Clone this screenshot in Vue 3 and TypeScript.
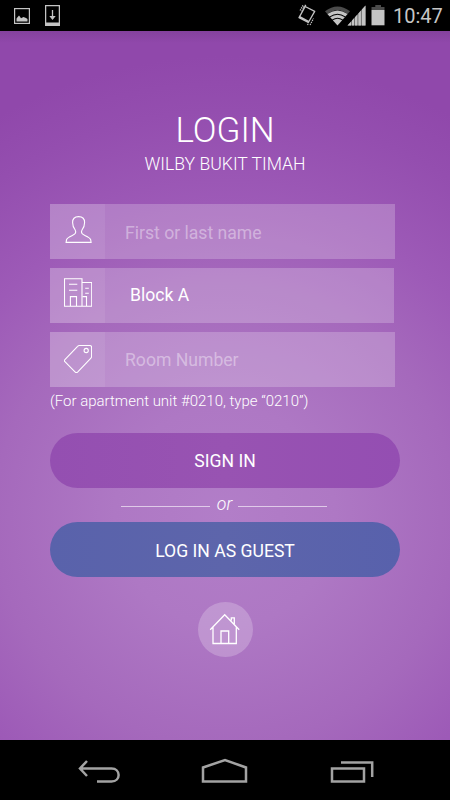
<script setup lang="ts">
import { ref } from 'vue'

const name = ref<string>('')
const block = ref<string>('Block A')
const room = ref<string>('')
</script>

<template>
  <div class="screen">
    <header class="status">
      <div class="status-left">
        <svg class="pic" width="16" height="16" viewBox="0 0 16 16">
          <rect x="0.6" y="0.6" width="14.8" height="14.8" fill="none" stroke="#c4c4c4" stroke-width="1.2" />
          <path d="M2.5 13.5V10.5L3.5 9.3L5 7.5L6 8.7L7 10.2L9.5 9L12 10L13.5 11V13.5Z" fill="#c4c4c4" />
        </svg>
        <svg width="15" height="22" viewBox="0 0 15 22">
          <path d="M0.6 0.6H14.4V20.4H0.6Z" fill="none" stroke="#c4c4c4" stroke-width="1.3" />
          <rect x="0" y="17.5" width="15" height="3.5" fill="#c4c4c4" />
          <path d="M7.5 5V12" stroke="#c4c4c4" stroke-width="1.3" />
          <path d="M4.3 11H10.7L7.5 15Z" fill="#c4c4c4" />
        </svg>
      </div>
      <div class="status-right">
        <svg width="18" height="22" viewBox="0 0 18 22">
          <path d="M7.2 2.5L16.7 7.4L10.3 18.5L1 13.6Z" fill="none" stroke="#c4c4c4" stroke-width="1.3" stroke-linejoin="round" />
          <path d="M1 13.6L10.3 18.5L11.2 17L2 12Z" fill="#c4c4c4" />
          <path d="M2 6.5L5 1M3.7 7.5L7 1M12 21L15.5 14.5M9.5 21L10.5 19M5.2 3.5L8 1" stroke="#c4c4c4" stroke-width="1.1" stroke-dasharray="1.5 0.8" fill="none" />
        </svg>
        <svg class="signals" width="41" height="22" viewBox="0 0 41 22">
          <path d="M0 7.2Q12.5 -2.2 25 7.2L22.6 10.1Q12.5 2.2 2.4 10.1Z" fill="#4b4b4b" />
          <path d="M2.4 10.1Q12.5 2.8 22.6 10.1L20.4 12.6Q12.5 6.8 4.6 12.6Z" fill="#c4c4c4" />
          <path d="M5.2 13.3Q12.5 8.2 19.8 13.3L17.8 15.6Q12.5 12 7.2 15.6Z" fill="#c4c4c4" />
          <path d="M7.8 16.2Q12.5 13.2 17.2 16.2L12.5 21.5Z" fill="#c4c4c4" />
          <path d="M22.5 21.5L40.5 1.5V21.5Z" fill="#707070" />
          <path d="M22.5 21.5L26 17.8V21.5ZM27 16.5L29 14.3V21.5H27ZM30 13.2L32.4 10.6V21.5H30ZM33.4 9.5L35.9 6.6V21.5H33.4ZM36.9 5.4L40.5 1.5V21.5H36.9Z" fill="#c4c4c4" />
        </svg>
        <svg class="battery" width="14" height="21" viewBox="0 0 14 21">
          <path d="M4.3 0H10V2H13.5V5H0.5V2H4.3Z" fill="#4b4b4b" />
          <rect x="0.5" y="5" width="13" height="15.3" fill="#c4c4c4" />
        </svg>
        <time class="clock">10:47</time>
      </div>
    </header>

    <main class="content">
      <h1>LOGIN</h1>
      <h2>WILBY BUKIT TIMAH</h2>

      <form class="form" @submit.prevent>
        <label class="field">
          <span class="icon">
            <svg width="28" height="30" viewBox="-0.6 -0.6 28 30">
              <path d="M14 1C9.9 1 7.8 3.4 8 7C8 10.2 8.9 12.4 10.6 14.4C11.2 15.4 11.2 16.9 10.6 18C9.4 20.1 3.2 20.4 1.9 24.2L1.5 26.8H26.5L26.1 24.2C24.8 20.4 18.6 20.1 17.4 18C16.8 16.9 16.8 15.4 17.4 14.4C19.1 12.4 20 10.2 20 7C20.2 3.4 18.1 1 14 1Z" />
            </svg>
          </span>
          <input v-model="name" type="text" placeholder="First or last name" />
        </label>
        <label class="field block">
          <span class="icon">
            <svg width="28" height="30" viewBox="0 0 28 30">
              <path d="M0.5 0.7H18V28.3H0.5ZM18 4.5H27.7V28.3H18" />
              <path d="M5 6.3H13.3M5 12.3H13.3M21.2 10.2H24.8M21.2 15.2H24.8M6.4 28V18.6H12.5V28M18.5 18.6H22.5V28" />
            </svg>
          </span>
          <input v-model="block" type="text" />
        </label>
        <label class="field room">
          <span class="icon">
            <svg width="28" height="30" viewBox="0 -0.5 28 30">
              <path d="M15.4 1H25.7Q27.6 1 27.6 2.9V11.9Q27.6 13 26.7 13.8L13.8 27.3Q12.4 28.7 11 27.3L0.9 17.2Q-0.1 16.2 0.9 15.2L13.6 1.8Q14.3 1 15.4 1Z" />
              <circle cx="22.2" cy="6" r="2.1" />
            </svg>
          </span>
          <input v-model="room" type="text" placeholder="Room Number" />
        </label>
        <p class="hint">(For apartment unit #0210, type “0210”)</p>
        <button class="btn signin" type="submit">SIGN IN</button>
        <div class="divider"><i class="line"></i><em>or</em><i class="line"></i></div>
        <button class="btn guest" type="button">LOG IN AS GUEST</button>
      </form>

      <button class="home" type="button" aria-label="Home">
        <svg width="32" height="32" viewBox="0 0 32 32">
          <path d="M1.2 16.8L15.7 1.7L30.2 16.8M4 14V30.5H27.3V14M12 30V18H19.7V30M22.3 7.5V4.8H25.3V11" />
        </svg>
      </button>
    </main>

    <nav class="navbar">
      <svg width="42" height="24" viewBox="0 0 42 24">
        <path d="M9 1L2 8.5L9 16M2 8.5H33.5C43 8.5 43 21.5 33.5 21.5H19" />
      </svg>
      <svg width="48" height="26" viewBox="0 0 48 26">
        <path d="M2 9.5L24 2L45 9.5V23.5H2Z" />
      </svg>
      <svg width="44" height="24" viewBox="0 0 44 24">
        <path d="M2 8.5H34V21.5H2ZM11 2.5H42.2V17" />
      </svg>
    </nav>
  </div>
</template>

<style>
body {
  margin: 0;
}
</style>

<style scoped>
.screen {
  width: 450px;
  height: 800px;
  display: flex;
  flex-direction: column;
  overflow: hidden;
  font-family: Roboto, "Noto Sans", sans-serif;
  color: #fff;
  background: #000;
}
svg {
  display: block;
  flex: none;
}
.status {
  height: 31px;
  flex: none;
  display: flex;
  justify-content: space-between;
  padding: 0 7px 0 14px;
}
.status-left {
  display: flex;
  gap: 15px;
  padding-top: 5px;
}
.pic {
  margin-top: 3px;
}
.status-right {
  display: flex;
  padding-top: 4px;
}
.signals {
  margin-left: 9px;
}
.battery {
  margin: 1px 8px 0 5px;
}
.clock {
  margin-top: -4px;
  width: 50px;
  font-size: 20px;
  line-height: 33px;
  color: #c6c6c6;
  white-space: nowrap;
}
.content {
  height: 709px;
  flex: none;
  box-sizing: border-box;
  padding: 78px 50px 0;
  display: flex;
  flex-direction: column;
  align-items: center;
  background:
    linear-gradient(rgba(70, 30, 90, 0.16), rgba(70, 30, 90, 0) 12px),
    radial-gradient(circle 460px at 50% 485px, #b27ec8 0%, #ae78c4 24%, #a569bc 50%, #9d5ab7 68%, #944eaf 88%, #9048ab 100%);
}
h1,
h2 {
  margin: 0;
  font-weight: 300;
  white-space: nowrap;
}
h1 {
  font-size: 35px;
  line-height: 43px;
}
h2 {
  font-size: 17.6px;
  line-height: 24px;
}
.form {
  width: 350px;
  margin-top: 28px;
  display: flex;
  flex-direction: column;
}
.field {
  width: 345px;
  height: 55px;
  margin-bottom: 9px;
  display: flex;
  background: rgba(255, 255, 255, 0.22);
}
.icon {
  width: 55px;
  display: flex;
  align-items: flex-start;
  justify-content: center;
  box-sizing: border-box;
  padding: 11px 0 0 1px;
  background: rgba(255, 255, 255, 0.07);
}
.icon path,
.icon circle,
.home path {
  fill: none;
  stroke: #fff;
  stroke-width: 1.1;
}
.field input {
  flex: 1;
  min-width: 0;
  border: 0;
  outline: 0;
  padding: 3px 0 0 20px;
  background: none;
  font-family: inherit;
  font-size: 17.6px;
  color: #fff;
}
.field input::placeholder {
  color: rgba(255, 255, 255, 0.4);
  opacity: 1;
}
.block {
  width: 344px;
}
.block .icon {
  padding-top: 10px;
}
.field.block input {
  padding: 0 0 1px 25px;
}
.room .icon {
  padding-top: 12px;
}
.field.room input {
  padding: 1px 0 0 20px;
}
.hint {
  margin: -6px 0 21px;
  font-size: 15px;
  font-weight: 300;
  line-height: 22px;
  white-space: nowrap;
}
.btn {
  width: 350px;
  height: 55px;
  border: 0;
  border-radius: 28px;
  padding: 0;
  font-family: inherit;
  font-size: 17.6px;
  color: #fff;
}
.signin {
  background: linear-gradient(90deg, #944fb1, #9853b2 50%, #944eb2);
}
.guest {
  padding-top: 2px;
  background: linear-gradient(90deg, #5962ab, #5d65ab 50%, #5861ac);
}
.divider {
  height: 34px;
  display: flex;
  justify-content: center;
  padding-right: 2px;
}
.line {
  width: 89px;
  height: 1px;
  margin-top: 18px;
  background: rgba(255, 255, 255, 0.6);
}
.divider em {
  width: 28px;
  padding-left: 1px;
  box-sizing: border-box;
  text-align: center;
  font-size: 17.6px;
  font-weight: 300;
  line-height: 33px;
}
.home {
  width: 55px;
  height: 55px;
  margin-top: 25px;
  padding: 0 0 2px;
  border: 0;
  border-radius: 50%;
  display: flex;
  align-items: center;
  justify-content: center;
  background: rgba(255, 255, 255, 0.22);
}
.home path {
  stroke-width: 1.3;
}
.navbar {
  height: 60px;
  flex: none;
  box-sizing: border-box;
  display: flex;
  align-items: flex-start;
  justify-content: space-between;
  padding: 20px 76.5px 0 78px;
}
.navbar svg:nth-child(2) {
  margin-top: -2px;
}
.navbar path {
  fill: none;
  stroke: #a3a3a3;
  stroke-width: 2.5;
}
</style>
